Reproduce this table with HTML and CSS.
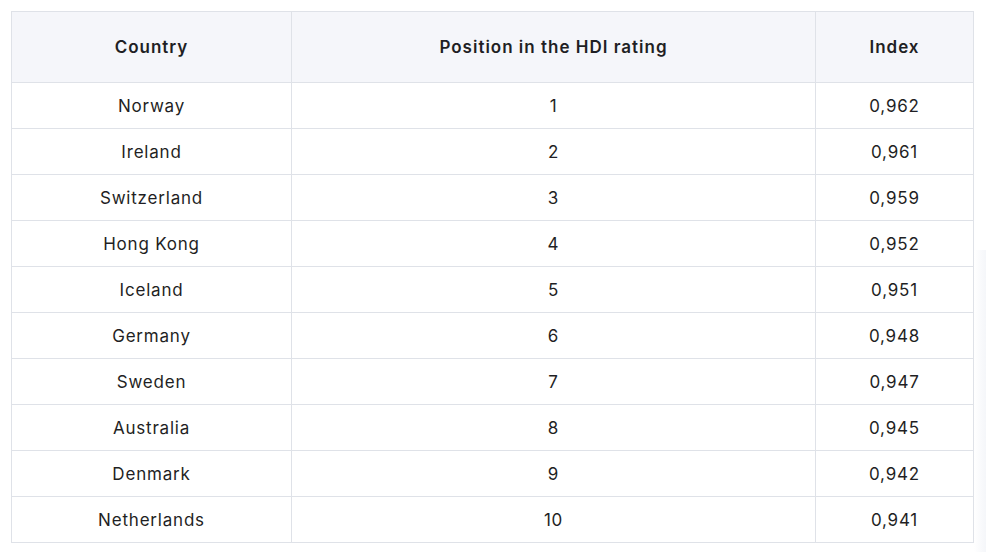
FILE: index.html
```html
<!DOCTYPE html>
<html lang="en">
<head>
<meta charset="utf-8">
<title>HDI rating</title>
<link rel="stylesheet" href="styles.css">
</head>
<body>
<div class="page">
  <table class="hdi">
    <colgroup>
      <col class="c-country">
      <col class="c-pos">
      <col class="c-index">
    </colgroup>
    <thead>
      <tr><th>Country</th><th>Position in the HDI rating</th><th>Index</th></tr>
    </thead>
    <tbody>
      <tr><td>Norway</td><td>1</td><td>0,962</td></tr>
      <tr><td>Ireland</td><td>2</td><td>0,961</td></tr>
      <tr><td>Switzerland</td><td>3</td><td>0,959</td></tr>
      <tr><td>Hong Kong</td><td>4</td><td>0,952</td></tr>
      <tr><td>Iceland</td><td>5</td><td>0,951</td></tr>
      <tr><td>Germany</td><td>6</td><td>0,948</td></tr>
      <tr><td>Sweden</td><td>7</td><td>0,947</td></tr>
      <tr><td>Australia</td><td>8</td><td>0,945</td></tr>
      <tr><td>Denmark</td><td>9</td><td>0,942</td></tr>
      <tr><td>Netherlands</td><td>10</td><td>0,941</td></tr>
    </tbody>
  </table>
  <div class="edge-shade"></div>
</div>
</body>
</html>
```
FILE: styles.css
```css
html, body {
  margin: 0;
  padding: 0;
  background: #ffffff;
}
.page {
  position: relative;
  padding: 11px 0 0 11px;
  width: 986px;
  height: 552px;
  box-sizing: border-box;
  overflow: hidden;
}
.hdi {
  border-collapse: collapse;
  table-layout: fixed;
  width: 962px;
  font-family: Inter, "Open Sans", sans-serif;
  color: #1f1f24;
  font-size: 17px;
  letter-spacing: 0.8px;
  position: relative;
  z-index: 1;
}
.c-country { width: 280px; }
.c-pos { width: 524px; }
.c-index { width: 158px; }
.hdi th, .hdi td {
  border: 1px solid #dfe2e8;
  text-align: center;
  padding: 0;
}
.hdi th {
  height: 70px;
  background: #f5f6fa;
  font-weight: 600;
  letter-spacing: 1px;
}
.hdi td {
  height: 45px;
  font-weight: 400;
}
.edge-shade {
  position: absolute;
  right: 0;
  top: 250px;
  width: 12px;
  height: 302px;
  background: linear-gradient(to right, rgba(242,244,248,0), rgba(242,244,248,0.8));
}
```
